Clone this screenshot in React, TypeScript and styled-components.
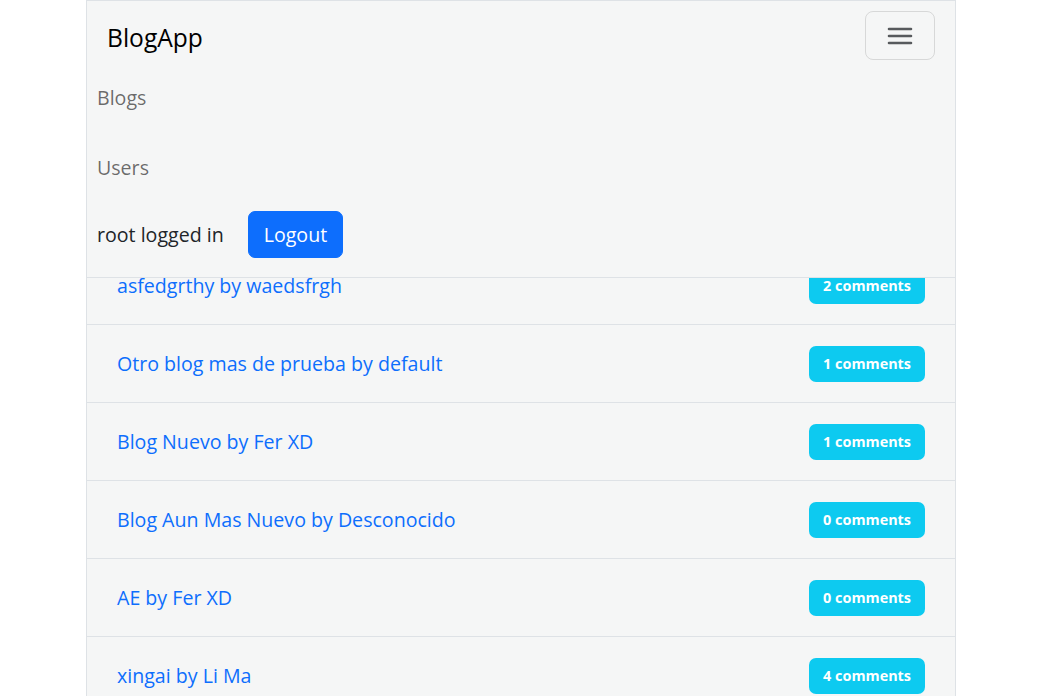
import * as React from "react"
import styled, { createGlobalStyle } from "styled-components"

const GlobalStyle = createGlobalStyle`
  body {
    margin: 0;
    background: #ffffff;
    font-family: "Open Sans", "Noto Sans", sans-serif;
    font-size: 19.6px;
    color: #212529;
  }
  * { box-sizing: border-box; }
`

const Frame = styled.div`
  width: 870px;
  margin-left: 86px;
  min-height: 696px;
  background: #f5f6f6;
  border-left: 1px solid #dee2e6;
  border-right: 1px solid #dee2e6;
  position: relative;
`

const Navbar = styled.nav`
  position: fixed;
  top: 0;
  left: 86px;
  width: 870px;
  z-index: 10;
  background: #f5f6f6;
  border: 1px solid #dee2e6;
  padding: 10px 0 10px;
`

const TopRow = styled.div`
  display: flex;
  align-items: center;
  justify-content: space-between;
  padding: 0 20px 0 20px;
  height: 49px;
`

const Brand = styled.a`
  font-size: 24.6px;
  font-weight: 500;
  color: #000000;
  text-decoration: none;
  margin-top: 3px;
`

const Toggler = styled.button`
  width: 70px;
  height: 49px;
  display: flex;
  align-items: center;
  justify-content: center;
  background: transparent;
  border: 1px solid rgba(0, 0, 0, 0.12);
  border-radius: 8px;
  padding: 0;
  cursor: pointer;
`

const Menu = styled.div`
  display: flex;
  flex-direction: column;
  padding: 2px 10px 0;
`

const NavLink = styled.a`
  height: 70px;
  display: flex;
  align-items: center;
  color: rgba(0, 0, 0, 0.58);
  text-decoration: none;
`

const LoginRow = styled.div`
  height: 65px;
  display: flex;
  align-items: center;
  gap: 24px;
`

const LogoutButton = styled.button`
  height: 47px;
  padding: 0 15px;
  font-family: inherit;
  font-size: 19.6px;
  color: #ffffff;
  background: #0d6efd;
  border: 1px solid #0d6efd;
  border-radius: 7px;
  cursor: pointer;
`

const List = styled.ul`
  list-style: none;
  margin: 0;
  padding: 247px 0 0;
`

const Row = styled.li`
  height: 78px;
  display: flex;
  align-items: center;
  justify-content: space-between;
  padding: 0 30px;
  border-bottom: 1px solid #dee2e6;
`

const BlogLink = styled.a`
  color: #0d6efd;
  font-weight: 500;
  text-decoration: none;
`

const Badge = styled.span`
  height: 36px;
  display: inline-flex;
  align-items: center;
  padding: 0 14px;
  border-radius: 7px;
  background: #0dcaf0;
  color: #ffffff;
  font-size: 14.4px;
  font-weight: 700;
`

const blogs = [
  { title: "asfedgrthy", author: "waedsfrgh", comments: 2 },
  { title: "Otro blog mas de prueba", author: "default", comments: 1 },
  { title: "Blog Nuevo", author: "Fer XD", comments: 1 },
  { title: "Blog Aun Mas Nuevo", author: "Desconocido", comments: 0 },
  { title: "AE", author: "Fer XD", comments: 0 },
  { title: "xingai", author: "Li Ma", comments: 4 },
]

const App: React.FC = () => {
  return (
    <>
      <GlobalStyle />
      <Frame>
        <Navbar>
          <TopRow>
            <Brand href="#">BlogApp</Brand>
            <Toggler aria-label="Toggle navigation">
              <svg width="30" height="30" viewBox="0 0 30 30">
                <path
                  d="M4 8h22M4 15h22M4 22h22"
                  stroke="rgba(33,37,41,0.75)"
                  strokeWidth="2.6"
                  strokeLinecap="round"
                />
              </svg>
            </Toggler>
          </TopRow>
          <Menu>
            <NavLink href="#">Blogs</NavLink>
            <NavLink href="#">Users</NavLink>
            <LoginRow>
              <span>root logged in</span>
              <LogoutButton>Logout</LogoutButton>
            </LoginRow>
          </Menu>
        </Navbar>
        <List>
          {blogs.map((b) => (
            <Row key={b.title}>
              <BlogLink href="#">
                {b.title} by {b.author}
              </BlogLink>
              <Badge>{b.comments} comments</Badge>
            </Row>
          ))}
        </List>
      </Frame>
    </>
  )
}

export default App
